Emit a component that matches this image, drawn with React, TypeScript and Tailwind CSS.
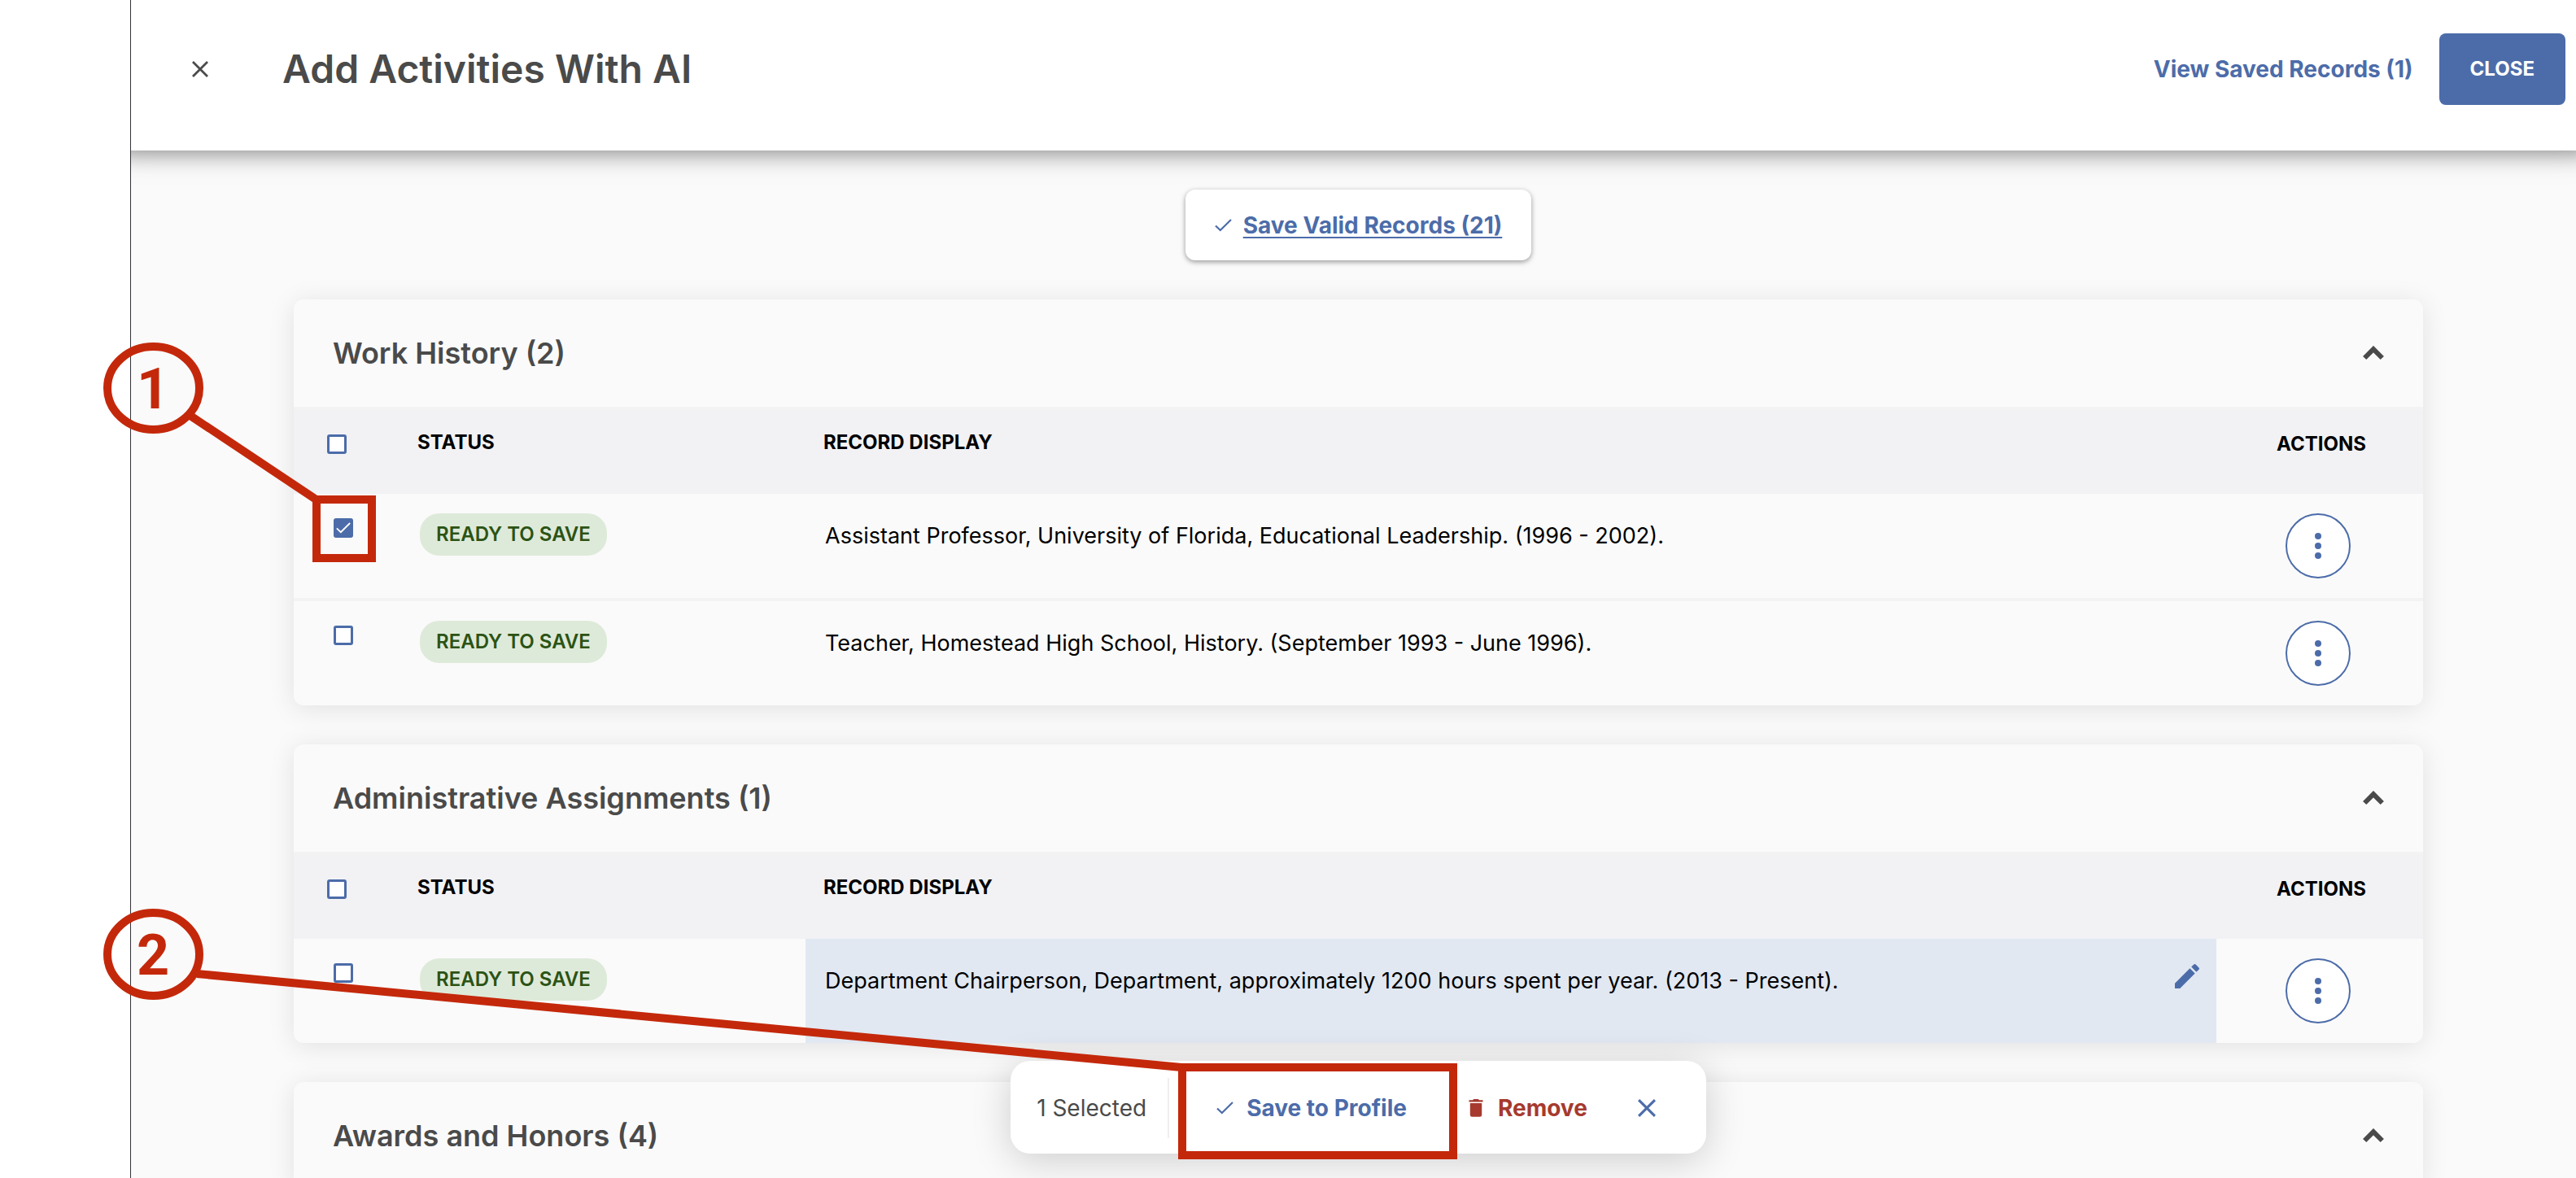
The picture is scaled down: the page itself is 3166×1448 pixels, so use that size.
import { useState } from "react";

type RecordRow = { text: string; editable?: boolean };
type Section = { title: string; rows: RecordRow[] };

const sections: Section[] = [
  {
    title: "Work History (2)",
    rows: [
      { text: "Assistant Professor, University of Florida, Educational Leadership. (1996 - 2002)." },
      { text: "Teacher, Homestead High School, History. (September 1993 - June 1996)." },
    ],
  },
  {
    title: "Administrative Assignments (1)",
    rows: [
      {
        text: "Department Chairperson, Department, approximately 1200 hours spent per year. (2013 - Present).",
        editable: true,
      },
    ],
  },
  { title: "Awards and Honors (4)", rows: [] },
];

function CloseIcon({ className }: { className?: string }) {
  return (
    <svg viewBox="0 0 20 20" className={className} fill="none" stroke="currentColor" strokeWidth="2.8">
      <path d="M1 1L19 19M19 1L1 19" />
    </svg>
  );
}

function CheckIcon({ className }: { className?: string }) {
  return (
    <svg viewBox="0 0 21 16" className={className} fill="none" stroke="currentColor" strokeWidth="2.2">
      <path d="M1 8.5L6.8 14L20 1" />
    </svg>
  );
}

function Checkbox({ label, defaultChecked }: { label: string; defaultChecked?: boolean }) {
  return (
    <span className="grid size-6">
      <input
        type="checkbox"
        aria-label={label}
        defaultChecked={defaultChecked}
        className="peer col-start-1 row-start-1 size-6 appearance-none rounded-[3px] border-3 border-[#4c6ca9] bg-white checked:bg-[#4c6ca9]"
      />
      <CheckIcon className="pointer-events-none col-start-1 row-start-1 hidden h-[14px] w-[18px] place-self-center text-white peer-checked:block" />
    </span>
  );
}

function RecordTable({ section }: { section: Section }) {
  return (
    <table className="w-full table-fixed border-separate border-spacing-0 text-left">
      <colgroup>
        <col className="w-[128px]" />
        <col className="w-[501px]" />
        <col />
        <col className="w-[254px]" />
      </colgroup>
      <thead>
        <tr className="h-[107px] bg-[#f2f2f5] align-top text-2xl font-bold text-black [&>th]:border-t-4 [&>th]:border-[#f3f3f4]">
          <th className="pt-[30px] pl-[41px]">
            <Checkbox label={"Select all in " + section.title} />
          </th>
          <th className="px-6 pt-6">STATUS</th>
          <th className="px-[22px] pt-6">RECORD DISPLAY</th>
          <th className="pt-[26px] pl-1 text-center">ACTIONS</th>
        </tr>
      </thead>
      <tbody>
        {section.rows.map((row, i) => (
          <tr
            key={row.text}
            className={"align-top " + (i > 0 ? "h-[132px] [&>td]:border-t-4 [&>td]:border-[#f3f3f4]" : "h-[128px]")}
          >
            <td className="pt-[30px] pl-[49px]">
              <Checkbox label={row.text} defaultChecked={row.text.startsWith("Assistant")} />
            </td>
            <td className="px-[27px] pt-6">
              <span className="flex h-[52px] w-fit items-center rounded-3xl bg-[#deead9] px-5 text-2xl font-semibold text-[#2b5314]">
                READY TO SAVE
              </span>
            </td>
            <td className={"pt-[26px] pr-4 pl-6 " + (row.editable ? "bg-[#e1e8f2]" : "")}>
              <div className="flex justify-between">
                <p className="text-[27px] leading-[52px] text-black">{row.text}</p>
                {row.editable && (
                  <button aria-label="Edit record" className="size-10 text-[#4c6ca9]">
                    <svg viewBox="0 0 24 24" className="size-10" fill="currentColor">
                      <path d="M3 17.25V21h3.75L17.81 9.94l-3.75-3.75L3 17.25zM20.71 7.04a1 1 0 0 0 0-1.41l-2.34-2.34a1 1 0 0 0-1.41 0l-1.83 1.83 3.75 3.75 1.83-1.83z" />
                    </svg>
                  </button>
                )}
              </div>
            </td>
            <td className="pt-6 pr-1">
              <button
                aria-label="Record actions"
                className="mx-auto flex size-20 flex-col items-center justify-center gap-1 rounded-full border-2 border-[#4c6ca9] bg-white"
              >
                <span className="size-2 rounded-full bg-[#4c6ca9]"></span>
                <span className="size-2 rounded-full bg-[#4c6ca9]"></span>
                <span className="size-2 rounded-full bg-[#4c6ca9]"></span>
              </button>
            </td>
          </tr>
        ))}
      </tbody>
    </table>
  );
}

function SectionCard({ section }: { section: Section }) {
  const [open, setOpen] = useState(true);
  return (
    <section className="w-full shrink-0 overflow-hidden rounded-xl bg-[#fafafa] shadow-[0_4px_32px_rgba(0,0,0,0.1)]">
      <div className="flex h-[132px] items-center justify-between px-12">
        <h2 className="text-4xl font-semibold text-[#4a4a4a]">{section.title}</h2>
        <button aria-label="Toggle section" onClick={() => setOpen(!open)} className="text-[#4a4a4a]">
          <svg viewBox="0 0 26 18" className="h-[18px] w-[26px]" fill="none" stroke="currentColor" strokeWidth="6">
            <path d="M2.2 15L13 4.2L23.8 15" />
          </svg>
        </button>
      </div>
      {open && section.rows.length > 0 && <RecordTable section={section} />}
    </section>
  );
}

function SelectionBar() {
  return (
    <div className="absolute inset-x-0 bottom-[30px] flex justify-center pr-[188px] pl-[200px]">
      <div className="flex h-[114px] items-center rounded-3xl bg-white pt-0.5 pr-[62px] pl-8 text-[28px] whitespace-nowrap shadow-[0_8px_48px_rgba(0,0,0,0.18)]">
        <span className="text-[#4a4a4a]">1 Selected</span>
        <span className="ml-[26px] h-[74px] w-0.5 bg-[#efefef]"></span>
        <button className="ml-[58px] flex items-center gap-4 font-bold text-[#4c6ca9]">
          <CheckIcon className="h-4 w-[21px]" />
          Save to Profile
        </button>
        <button className="ml-[76px] flex items-center gap-[18px] font-bold text-[#a63a2e]">
          <svg viewBox="0 0 18 22" className="h-[22px] w-[18px]" fill="currentColor">
            <path d="M0.5 1.2h4.6L6.2 0h5.6l1.1 1.2h4.6v2.4h-17zM1.8 5h14.4v14.4a2.4 2.4 0 0 1-2.4 2.4H4.2a2.4 2.4 0 0 1-2.4-2.4z" />
          </svg>
          Remove
        </button>
        <button aria-label="Clear selection" className="ml-[62px] text-[#4c6ca9]">
          <CloseIcon className="size-[22px]" />
        </button>
      </div>
    </div>
  );
}

function Callouts() {
  return (
    <svg
      className="pointer-events-none absolute top-0 left-0 z-20 h-[1448px] w-[1800px]"
      viewBox="0 0 1800 1448"
      fill="none"
      stroke="#c4280b"
      strokeWidth="10"
    >
      <ellipse cx="188.5" cy="477" rx="56.5" ry="51" />
      <path d="M234 511L387 613" />
      <rect x="389" y="614" width="68" height="72" />
      <ellipse cx="188.5" cy="1173" rx="56.5" ry="51" />
      <path d="M242 1197L1452 1312" />
      <rect x="1453" y="1312" width="333" height="108" />
      <g fill="#c4280b" stroke="none" className="font-['Roboto',sans-serif] text-[70px] font-bold" textAnchor="middle">
        <text x="188" y="502">1</text>
        <text x="188" y="1198">2</text>
      </g>
    </svg>
  );
}

export default function App() {
  return (
    <div className="relative flex h-screen overflow-hidden bg-white pl-[160px] font-['Inter',sans-serif]">
      <div className="relative flex min-w-0 grow flex-col overflow-hidden border-l border-[#32323a]">
        <header className="z-10 flex h-[185px] shrink-0 items-start bg-white pr-[13px] pl-[75px] shadow-[0_-12px_24px_16px_rgba(0,0,0,0.4),0_-4px_40px_16px_rgba(0,0,0,0.06)]">
          <div className="flex h-[170px] grow items-center">
            <button aria-label="Close panel" className="text-[#4a4a4a]">
              <CloseIcon className="size-5" />
            </button>
            <h1 className="ml-[91px] text-5xl font-semibold text-[#4a4a4a]">Add Activities With AI</h1>
            <a href="#saved" className="ml-auto text-[28px] font-bold text-[#4c6ca9]">
              View Saved Records (1)
            </a>
            <button className="ml-8 h-[88px] rounded-lg bg-[#4c6ca9] px-[38px] text-2xl font-bold text-white">
              CLOSE
            </button>
          </div>
        </header>
        <main className="relative flex min-h-0 grow flex-col items-center gap-12 overflow-hidden bg-[#fafafa] pt-12 pr-[188px] pl-[200px]">
          <button className="flex h-[87px] shrink-0 items-center gap-[14px] rounded-xl bg-white px-9 text-[28px] font-bold text-[#4c6ca9] shadow-[0_2px_6px_rgba(0,0,0,0.4)]">
            <CheckIcon className="h-4 w-[21px]" />
            <span className="underline decoration-2 underline-offset-4">Save Valid Records (21)</span>
          </button>
          {sections.map((section) => (
            <SectionCard key={section.title} section={section} />
          ))}
        </main>
        <SelectionBar />
      </div>
      <Callouts />
    </div>
  );
}
